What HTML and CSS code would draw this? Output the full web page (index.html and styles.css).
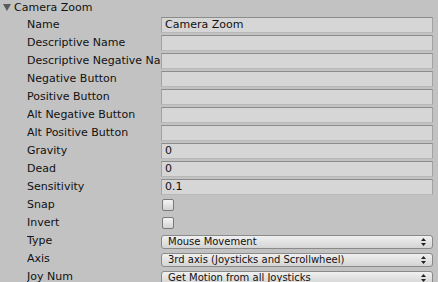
FILE: index.html
```html
<!DOCTYPE html>
<html>
<head>
<meta charset="utf-8">
<link rel="stylesheet" href="styles.css">
</head>
<body>
<div class="inspector">
  <div class="header">
    <span class="foldout"></span>
    <span class="title">Camera Zoom</span>
  </div>
  <div class="rows">
    <div class="row"><div class="label">Name</div><div class="field text">Camera Zoom</div></div>
    <div class="row"><div class="label">Descriptive Name</div><div class="field text"></div></div>
    <div class="row"><div class="label">Descriptive Negative Name</div><div class="field text"></div></div>
    <div class="row"><div class="label">Negative Button</div><div class="field text"></div></div>
    <div class="row"><div class="label">Positive Button</div><div class="field text"></div></div>
    <div class="row"><div class="label">Alt Negative Button</div><div class="field text"></div></div>
    <div class="row"><div class="label">Alt Positive Button</div><div class="field text"></div></div>
    <div class="row"><div class="label">Gravity</div><div class="field text">0</div></div>
    <div class="row"><div class="label">Dead</div><div class="field text">0</div></div>
    <div class="row"><div class="label">Sensitivity</div><div class="field text">0.1</div></div>
    <div class="row"><div class="label">Snap</div><div class="field"><span class="checkbox"></span></div></div>
    <div class="row"><div class="label">Invert</div><div class="field"><span class="checkbox"></span></div></div>
    <div class="row"><div class="label">Type</div><div class="field"><div class="popup"><span>Mouse Movement</span><svg class="arrows" width="5" height="8" viewBox="0 0 5 8"><path d="M2.5 0 L5 3 L0 3 Z M0 5 L5 5 L2.5 8 Z" fill="#222"/></svg></div></div></div>
    <div class="row"><div class="label">Axis</div><div class="field"><div class="popup"><span>3rd axis (Joysticks and Scrollwheel)</span><svg class="arrows" width="5" height="8" viewBox="0 0 5 8"><path d="M2.5 0 L5 3 L0 3 Z M0 5 L5 5 L2.5 8 Z" fill="#222"/></svg></div></div></div>
    <div class="row"><div class="label">Joy Num</div><div class="field"><div class="popup"><span>Get Motion from all Joysticks</span><svg class="arrows" width="5" height="8" viewBox="0 0 5 8"><path d="M2.5 0 L5 3 L0 3 Z M0 5 L5 5 L2.5 8 Z" fill="#222"/></svg></div></div></div>
  </div>
</div>
</body>
</html>
```
FILE: styles.css
```css
html, body {
  margin: 0;
  padding: 0;
  background: #c2c2c2;
  width: 438px;
  height: 282px;
  overflow: hidden;
}
.inspector {
  font-family: "DejaVu Sans", Verdana, sans-serif;
  font-size: 11px;
  color: #111;
}
.header {
  display: flex;
  align-items: center;
  height: 15px;
  padding-left: 3px;
}
.foldout {
  width: 0;
  height: 0;
  border-left: 4px solid transparent;
  border-right: 4px solid transparent;
  border-top: 7px solid #5a5a5a;
  margin-right: 3px;
}
.title {
  line-height: 15px;
}
.rows {
  display: flex;
  flex-direction: column;
  gap: 2px;
  padding-top: 2px;
}
.row {
  display: flex;
  height: 16px;
  align-items: center;
}
.label {
  width: 134px;
  margin-left: 27px;
  white-space: nowrap;
  overflow: hidden;
  line-height: 16px;
}
.field {
  width: 272px;
  height: 16px;
  display: flex;
  align-items: center;
}
.field.text {
  box-sizing: border-box;
  background: #d6d6d6;
  border: 1px solid #a3a3a3;
  border-top-color: #8c8c8c;
  border-bottom-color: #b8b8b8;
  padding-left: 3px;
  line-height: 14px;
}
.checkbox {
  display: block;
  box-sizing: border-box;
  width: 12px;
  height: 12px;
  margin-left: 1px;
  border: 1px solid #7a7a7a;
  border-radius: 2px;
  background: linear-gradient(#f4f4f4, #d2d2d2);
}
.popup {
  box-sizing: border-box;
  width: 272px;
  height: 14px;
  margin-top: 1px;
  border: 1px solid #8a8a8a;
  border-radius: 3px;
  background: linear-gradient(#f0f0f0, #d4d4d4);
  display: flex;
  align-items: center;
  justify-content: space-between;
  padding: 0 6px 0 6px;
  font-size: 10px;
  line-height: 12px;
}
.arrows {
  display: block;
}
```
